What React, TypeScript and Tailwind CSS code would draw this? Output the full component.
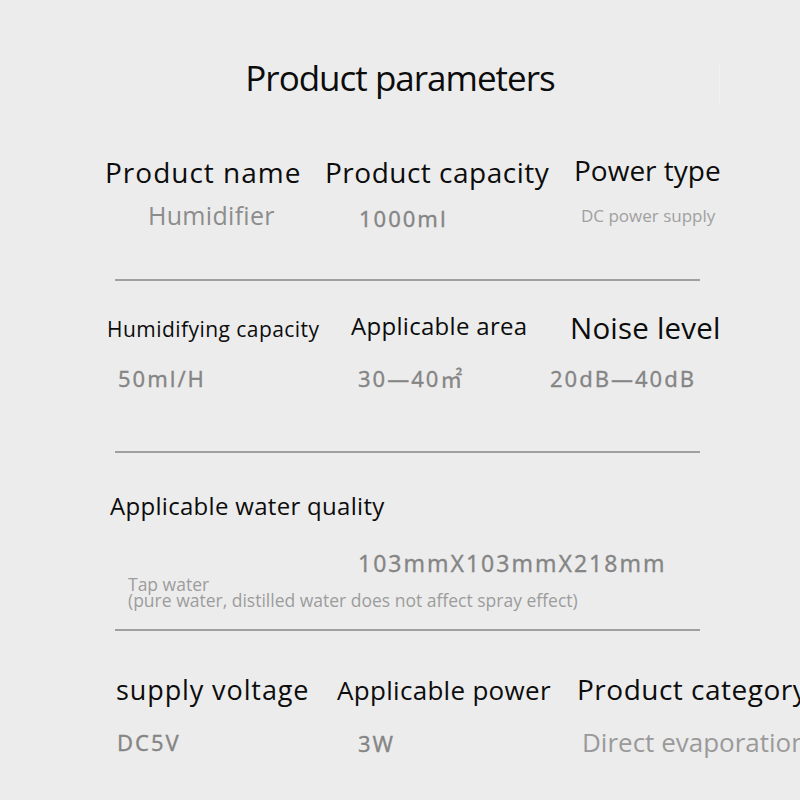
const HEAD = "text-[#0c0c0c] leading-none whitespace-nowrap shrink-0";
const NUM =
  "font-['Noto_Sans','Noto_Sans_CJK_SC',sans-serif] text-[22px] tracking-[2px] text-[#858585] leading-none whitespace-nowrap shrink-0 [-webkit-text-stroke:0.3px_#858585]";

const Divider = ({ className }: { className: string }) => (
  <div className={`ml-[115px] w-[585px] h-[2px] bg-[#a0a0a0] shrink-0 ${className}`} />
);

export default function App() {
  return (
    <div className="relative w-[800px] h-[800px] overflow-hidden bg-[#ececec] font-['Open_Sans',sans-serif]">
      {/* faint seam from the original picture */}
      <div className="absolute left-[719px] top-[65px] w-px h-[38px] bg-[#f3f3f3]" />

      <div className="flex flex-col pt-[60px]">
        <h1 className="h-[35px] text-center text-[35px] leading-none tracking-[-1px] text-[#0c0c0c] font-normal">
          Product parameters
        </h1>

        {/* row 1 */}
        <div className="flex items-start h-[31px] mt-[60px]">
          <span className={`${HEAD} ml-[105px] w-[220px] mt-[3px] text-[28px] tracking-[1px]`}>Product name</span>
          <span className={`${HEAD} w-[249px] mt-[3px] text-[28px] tracking-[0.5px]`}>Product capacity</span>
          <span className={`${HEAD} mt-[1px] text-[28px]`}>Power type</span>
        </div>
        <div className="flex items-start h-[30px] mt-[17px]">
          <span className="ml-[148px] w-[211px] shrink-0 whitespace-nowrap leading-none text-[25px] tracking-[0.3px] text-[#8c8c8c]">
            Humidifier
          </span>
          <span className={`${NUM} w-[222px] mt-[4px]`}>1000ml</span>
          <span className="mt-[4px] shrink-0 whitespace-nowrap leading-none text-[17px] text-[#a0a0a0]">
            DC power supply
          </span>
        </div>

        <Divider className="mt-[46px]" />

        {/* row 2 */}
        <div className="flex items-start h-[32px] mt-[32px]">
          <span className={`${HEAD} ml-[107px] w-[244px] mt-[6px] text-[21px] tracking-[0.45px]`}>Humidifying capacity</span>
          <span className={`${HEAD} w-[219px] mt-[1px] text-[24px] tracking-[0.3px]`}>Applicable area</span>
          <span className={`${HEAD} text-[29.5px] tracking-[0.2px]`}>Noise level</span>
        </div>
        <div className="flex items-start h-[24px] mt-[22px]">
          <span className={`${NUM} ml-[118px] w-[240px]`}>50ml/H</span>
          <span className={`${NUM} w-[192px] tracking-[2.5px]`}>30—40㎡</span>
          <span className={NUM}>20dB—40dB</span>
        </div>

        <Divider className="mt-[60px]" />

        {/* water quality */}
        <div className="mt-[41px] ml-[110px] text-[24px] tracking-[0.3px] leading-none text-[#0c0c0c] whitespace-nowrap">
          Applicable water quality
        </div>
        <div className={`${NUM} mt-[34px] ml-[358px] text-[23px] tracking-[1.8px] leading-[20px]`}>103mmX103mmX218mm</div>
        <div className="ml-[128px] mt-[1px] text-[17.5px] leading-[16px] text-[#9c9c9c] whitespace-nowrap">
          <div>Tap water</div>
          <div>(pure water, distilled water does not affect spray effect)</div>
        </div>

        <Divider className="mt-[21px]" />

        {/* row 4 */}
        <div className="flex items-start h-[32px] mt-[44px]">
          <span className={`${HEAD} ml-[116px] w-[221px] mt-[1px] text-[27px] tracking-[0.9px]`}>supply voltage</span>
          <span className={`${HEAD} w-[240px] mt-[2px] text-[26px] tracking-[0.3px]`}>Applicable power</span>
          <span className={`${HEAD} text-[28px] tracking-[0.5px]`}>Product category</span>
        </div>
        <div className="flex items-start mt-[22px]">
          <span className={`${NUM} ml-[117px] w-[241px] mt-[2px]`}>DC5V</span>
          <span className={`${NUM} w-[224px] mt-[3px]`}>3W</span>
          <span className="shrink-0 whitespace-nowrap leading-none text-[26px] text-[#9a9a9a]">Direct evaporation</span>
        </div>
      </div>
    </div>
  );
}
